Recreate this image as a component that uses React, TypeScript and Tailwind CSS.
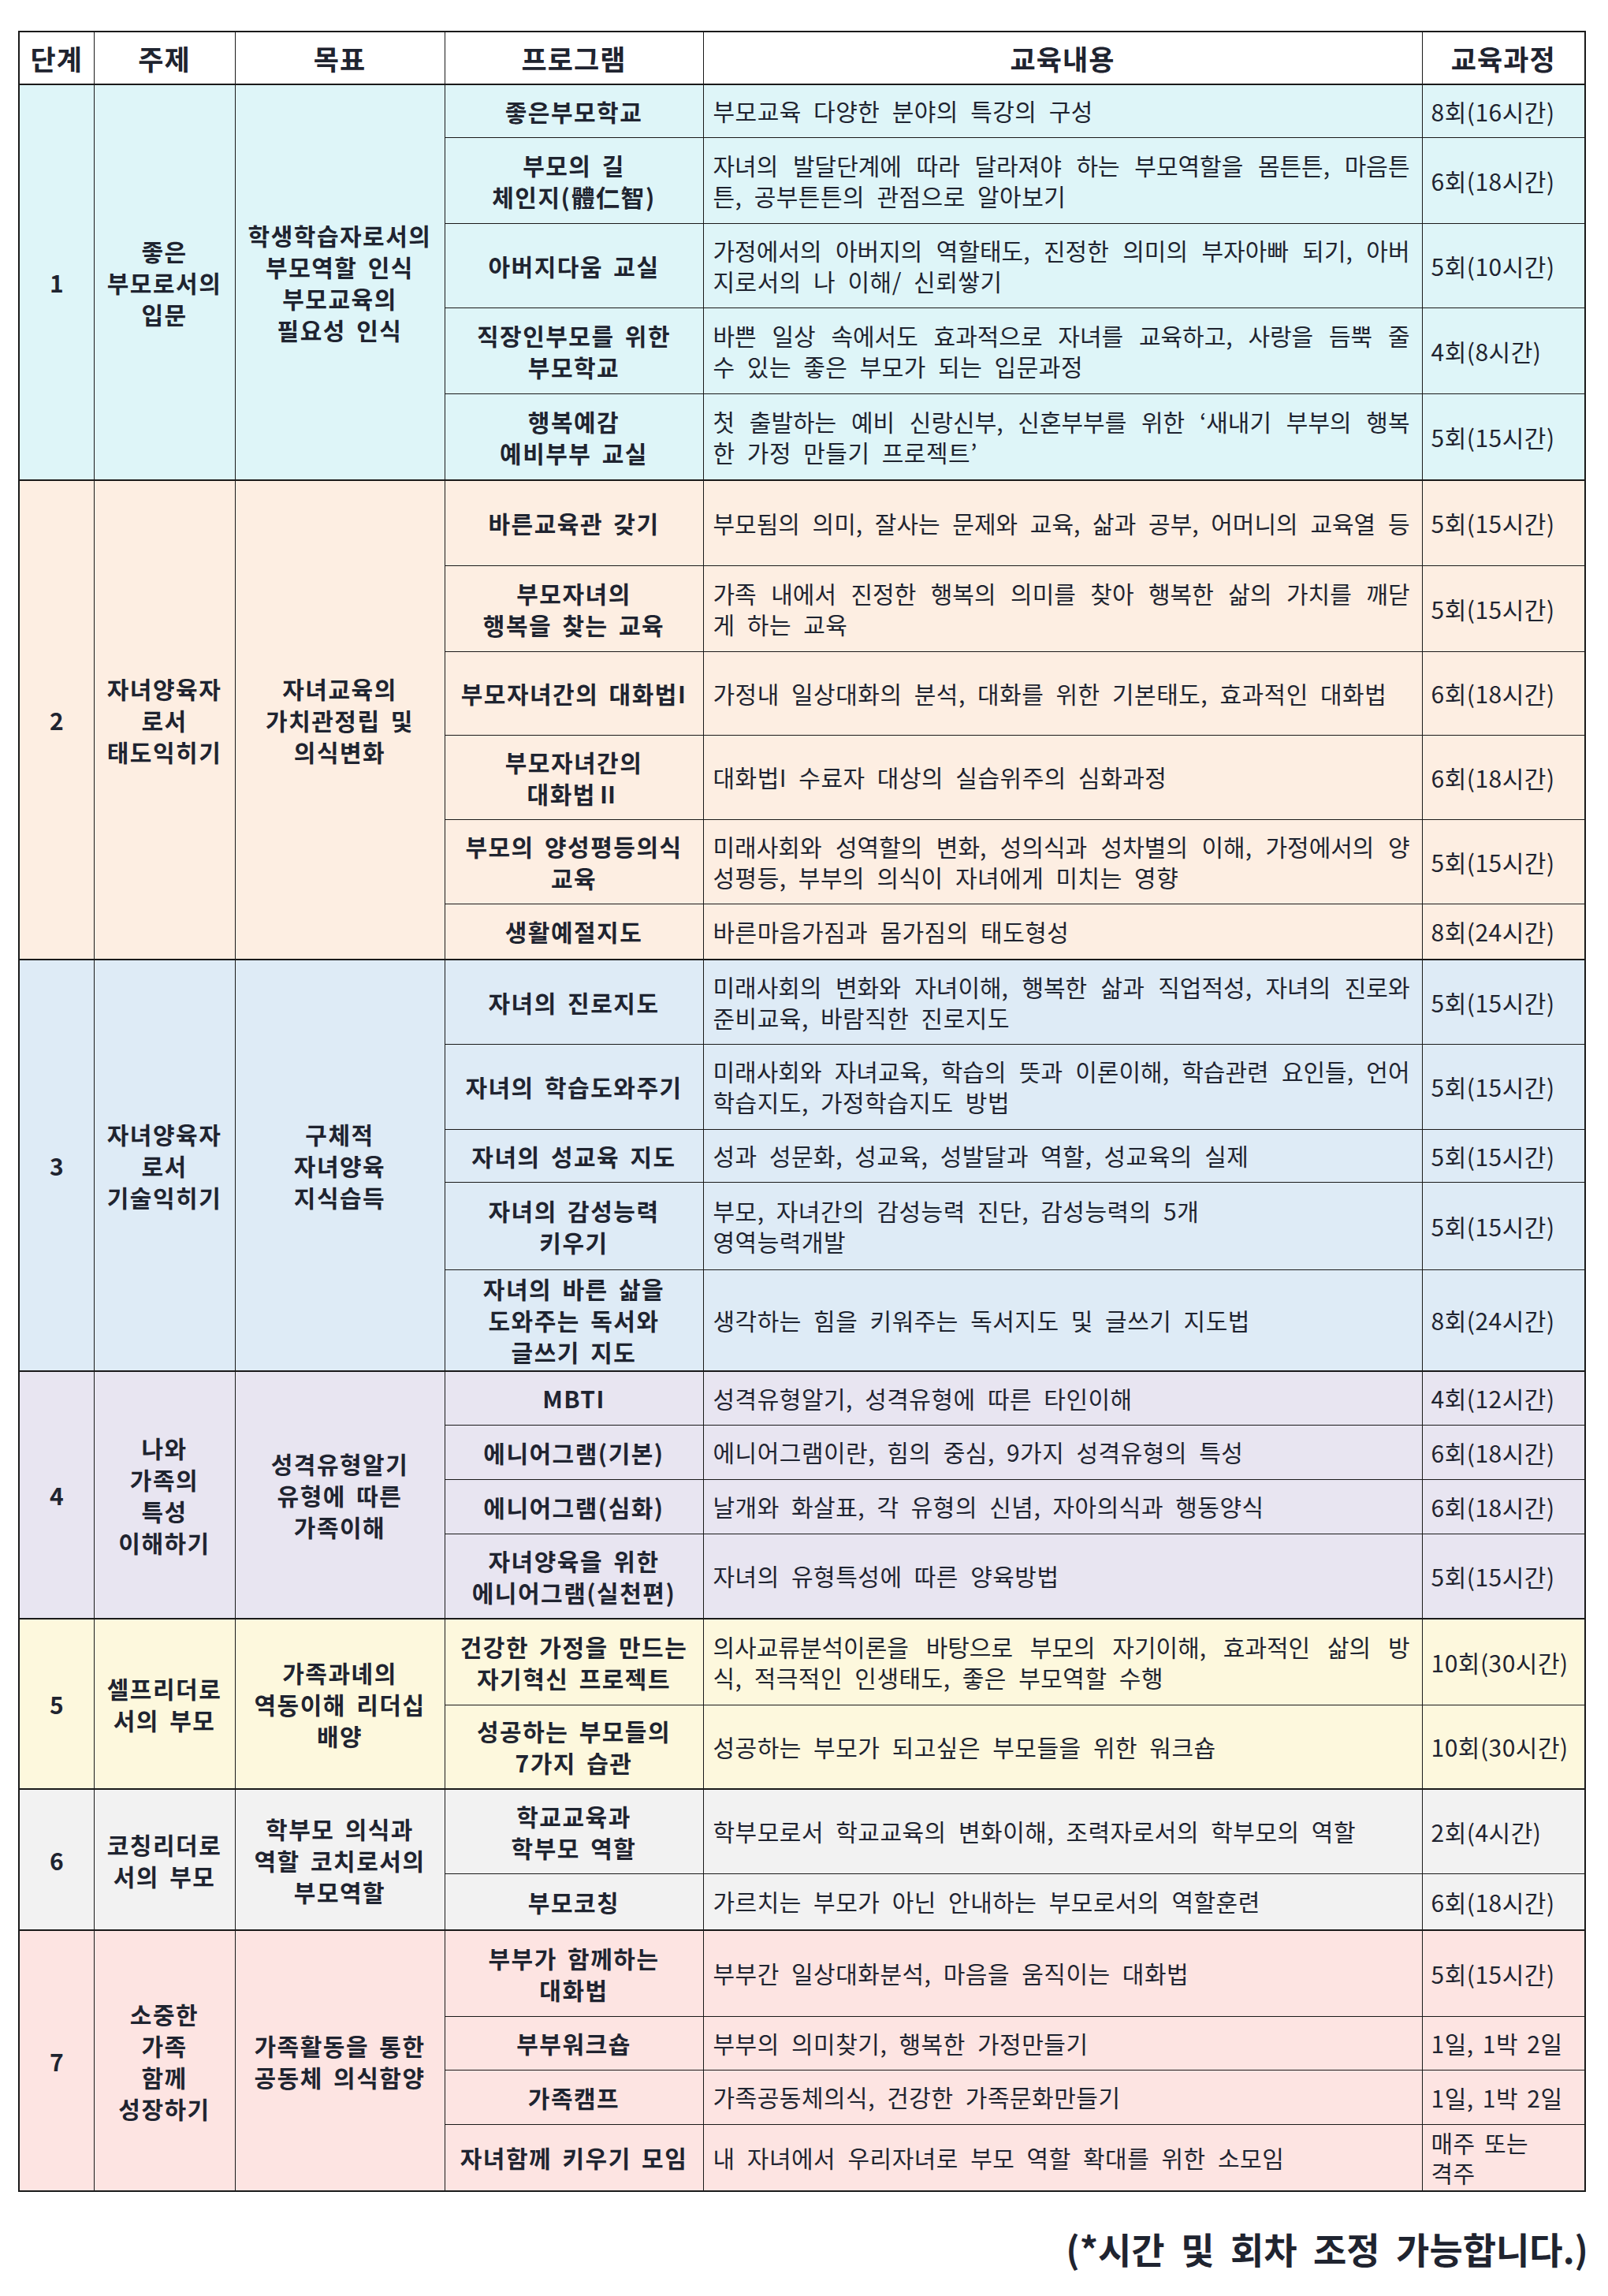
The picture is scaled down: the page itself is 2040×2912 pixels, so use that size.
import React from 'react'

interface Row {
  h: string
  prog: string[]
  content: string[]
  fill?: boolean
  course: string[]
}

interface Section {
  no: string
  topic: string[]
  goal: string[]
  bg: string
  rows: Row[]
}

const sections: Section[] = [
  {
    no: '1',
    topic: ['좋은', '부모로서의', '입문'],
    goal: ['학생학습자로서의', '부모역할 인식', '부모교육의', '필요성 인식'],
    bg: 'bg-[#def5f8]',
    rows: [
      { h: 'h-[67px]', prog: ['좋은부모학교'], content: ['부모교육 다양한 분야의 특강의 구성'], course: ['8회(16시간)'] },
      {
        h: 'h-[109px]',
        prog: ['부모의 길', '체인지(體仁智)'],
        content: ['자녀의 발달단계에 따라 달라져야 하는 부모역할을 몸튼튼, 마음튼', '튼, 공부튼튼의 관점으로 알아보기'],
        fill: true,
        course: ['6회(18시간)']
      },
      {
        h: 'h-[107px]',
        prog: ['아버지다움 교실'],
        content: ['가정에서의 아버지의 역할태도, 진정한 의미의 부자아빠 되기, 아버', '지로서의 나 이해/ 신뢰쌓기'],
        fill: true,
        course: ['5회(10시간)']
      },
      {
        h: 'h-[109px]',
        prog: ['직장인부모를 위한', '부모학교'],
        content: ['바쁜 일상 속에서도 효과적으로 자녀를 교육하고, 사랑을 듬뿍 줄', '수 있는 좋은 부모가 되는 입문과정'],
        fill: true,
        course: ['4회(8시간)']
      },
      {
        h: 'h-[110px]',
        prog: ['행복예감', '예비부부 교실'],
        content: ['첫 출발하는 예비 신랑신부, 신혼부부를 위한 ‘새내기 부부의 행복', '한 가정 만들기 프로젝트’'],
        fill: true,
        course: ['5회(15시간)']
      }
    ]
  },
  {
    no: '2',
    topic: ['자녀양육자', '로서', '태도익히기'],
    goal: ['자녀교육의', '가치관정립 및', '의식변화'],
    bg: 'bg-[#fdeee2]',
    rows: [
      {
        h: 'h-[108px]',
        prog: ['바른교육관 갖기'],
        content: ['부모됨의 의미, 잘사는 문제와 교육, 삶과 공부, 어머니의 교육열 등', ''],
        fill: true,
        course: ['5회(15시간)']
      },
      {
        h: 'h-[109px]',
        prog: ['부모자녀의', '행복을 찾는 교육'],
        content: ['가족 내에서 진정한 행복의 의미를 찾아 행복한 삶의 가치를 깨닫', '게 하는 교육'],
        fill: true,
        course: ['5회(15시간)']
      },
      {
        h: 'h-[106px]',
        prog: ['부모자녀간의 대화법I'],
        content: ['가정내 일상대화의 분석, 대화를 위한 기본태도, 효과적인 대화법'],
        course: ['6회(18시간)']
      },
      {
        h: 'h-[107px]',
        prog: ['부모자녀간의', '대화법Ⅱ'],
        content: ['대화법I 수료자 대상의 실습위주의 심화과정'],
        course: ['6회(18시간)']
      },
      {
        h: 'h-[107px]',
        prog: ['부모의 양성평등의식', '교육'],
        content: ['미래사회와 성역할의 변화, 성의식과 성차별의 이해, 가정에서의 양', '성평등, 부부의 의식이 자녀에게 미치는 영향'],
        fill: true,
        course: ['5회(15시간)']
      },
      { h: 'h-[71px]', prog: ['생활예절지도'], content: ['바른마음가짐과 몸가짐의 태도형성'], course: ['8회(24시간)'] }
    ]
  },
  {
    no: '3',
    topic: ['자녀양육자', '로서', '기술익히기'],
    goal: ['구체적', '자녀양육', '지식습득'],
    bg: 'bg-[#deebf6]',
    rows: [
      {
        h: 'h-[107px]',
        prog: ['자녀의 진로지도'],
        content: ['미래사회의 변화와 자녀이해, 행복한 삶과 직업적성, 자녀의 진로와', '준비교육, 바람직한 진로지도'],
        fill: true,
        course: ['5회(15시간)']
      },
      {
        h: 'h-[108px]',
        prog: ['자녀의 학습도와주기'],
        content: ['미래사회와 자녀교육, 학습의 뜻과 이론이해, 학습관련 요인들, 언어', '학습지도, 가정학습지도 방법'],
        fill: true,
        course: ['5회(15시간)']
      },
      { h: 'h-[67px]', prog: ['자녀의 성교육 지도'], content: ['성과 성문화, 성교육, 성발달과 역할, 성교육의 실제'], course: ['5회(15시간)'] },
      {
        h: 'h-[111px]',
        prog: ['자녀의 감성능력', '키우기'],
        content: ['부모, 자녀간의 감성능력 진단, 감성능력의 5개', '영역능력개발'],
        course: ['5회(15시간)']
      },
      {
        h: 'h-[129px]',
        prog: ['자녀의 바른 삶을', '도와주는 독서와', '글쓰기 지도'],
        content: ['생각하는 힘을 키워주는 독서지도 및 글쓰기 지도법'],
        course: ['8회(24시간)']
      }
    ]
  },
  {
    no: '4',
    topic: ['나와', '가족의', '특성', '이해하기'],
    goal: ['성격유형알기', '유형에 따른', '가족이해'],
    bg: 'bg-[#e8e5f1]',
    rows: [
      { h: 'h-[68px]', prog: ['MBTI'], content: ['성격유형알기, 성격유형에 따른 타인이해'], course: ['4회(12시간)'] },
      { h: 'h-[69px]', prog: ['에니어그램(기본)'], content: ['에니어그램이란, 힘의 중심, 9가지 성격유형의 특성'], course: ['6회(18시간)'] },
      { h: 'h-[69px]', prog: ['에니어그램(심화)'], content: ['날개와 화살표, 각 유형의 신념, 자아의식과 행동양식'], course: ['6회(18시간)'] },
      {
        h: 'h-[108px]',
        prog: ['자녀양육을 위한', '에니어그램(실천편)'],
        content: ['자녀의 유형특성에 따른 양육방법'],
        course: ['5회(15시간)']
      }
    ]
  },
  {
    no: '5',
    topic: ['셀프리더로', '서의 부모'],
    goal: ['가족과녜의', '역동이해 리더십', '배양'],
    bg: 'bg-[#fdf8dd]',
    rows: [
      {
        h: 'h-[109px]',
        prog: ['건강한 가정을 만드는', '자기혁신 프로젝트'],
        content: ['의사교류분석이론을 바탕으로 부모의 자기이해, 효과적인 삶의 방', '식, 적극적인 인생태도, 좋은 부모역할 수행'],
        fill: true,
        course: ['10회(30시간)']
      },
      {
        h: 'h-[107px]',
        prog: ['성공하는 부모들의', '7가지 습관'],
        content: ['성공하는 부모가 되고싶은 부모들을 위한 워크숍'],
        course: ['10회(30시간)']
      }
    ]
  },
  {
    no: '6',
    topic: ['코칭리더로', '서의 부모'],
    goal: ['학부모 의식과', '역할 코치로서의', '부모역할'],
    bg: 'bg-[#f2f2f2]',
    rows: [
      {
        h: 'h-[107px]',
        prog: ['학교교육과', '학부모 역할'],
        content: ['학부모로서 학교교육의 변화이해, 조력자로서의 학부모의 역할'],
        course: ['2회(4시간)']
      },
      { h: 'h-[72px]', prog: ['부모코칭'], content: ['가르치는 부모가 아닌 안내하는 부모로서의 역할훈련'], course: ['6회(18시간)'] }
    ]
  },
  {
    no: '7',
    topic: ['소중한', '가족', '함께', '성장하기'],
    goal: ['가족활동을 통한', '공동체 의식함양'],
    bg: 'bg-[#fde4e2]',
    rows: [
      {
        h: 'h-[109px]',
        prog: ['부부가 함께하는', '대화법'],
        content: ['부부간 일상대화분석, 마음을 움직이는 대화법'],
        course: ['5회(15시간)']
      },
      { h: 'h-[68px]', prog: ['부부워크숍'], content: ['부부의 의미찾기, 행복한 가정만들기'], course: ['1일, 1박 2일'] },
      { h: 'h-[69px]', prog: ['가족캠프'], content: ['가족공동체의식, 건강한 가족문화만들기'], course: ['1일, 1박 2일'] },
      {
        h: 'h-[85px]',
        prog: ['자녀함께 키우기 모임'],
        content: ['내 자녀에서 우리자녀로 부모 역할 확대를 위한 소모임'],
        course: ['매주 또는', '격주']
      }
    ]
  }
]

const cell = 'border border-[#1a1a1a] align-middle p-0'
const bold = 'text-center text-[30px] font-bold leading-[40px] tracking-[1.5px] [word-spacing:5px]'

function Lines({ lines }: { lines: string[] }) {
  return (
    <>
      {lines.map((l, i) => (
        <div key={i}>{l}</div>
      ))}
    </>
  )
}

export default function App() {
  return (
    <div
      className="w-[2040px] min-h-[2912px] bg-white text-[#1f2430] pt-[39px] pl-[23px] pr-[30px]"
      style={{ fontFamily: '"Noto Sans CJK KR", "Noto Sans", sans-serif' }}
    >
      <table className="table-fixed border-collapse w-[1987px] border-2 border-[#1a1a1a]">
        <colgroup>
          <col className="w-[95px]" />
          <col className="w-[179px]" />
          <col className="w-[266px]" />
          <col className="w-[328px]" />
          <col className="w-[912px]" />
          <col className="w-[207px]" />
        </colgroup>
        <thead>
          <tr className="h-[67px] text-[35px] font-bold leading-[40px] tracking-[1px] bg-white">
            <th className={`${cell} text-center`}>단계</th>
            <th className={`${cell} text-center`}>주제</th>
            <th className={`${cell} text-center`}>목표</th>
            <th className={`${cell} text-center`}>프로그램</th>
            <th className={`${cell} text-center`}>교육내용</th>
            <th className={`${cell} text-center`}>교육과정</th>
          </tr>
        </thead>
        {sections.map((s) => (
          <tbody key={s.no} className={`${s.bg} border-t-2 border-[#1a1a1a]`}>
            {s.rows.map((r, i) => (
              <tr key={i} className={r.h}>
                {i === 0 && (
                  <>
                    <td rowSpan={s.rows.length} className={`${cell} text-center text-[30px] font-bold leading-[40px]`}>
                      {s.no}
                    </td>
                    <td rowSpan={s.rows.length} className={`${cell} ${bold}`}>
                      <Lines lines={s.topic} />
                    </td>
                    <td rowSpan={s.rows.length} className={`${cell} ${bold}`}>
                      <Lines lines={s.goal} />
                    </td>
                  </>
                )}
                <td className={`${cell} ${bold} px-1`}>
                  <Lines lines={r.prog} />
                </td>
                <td className={`${cell} text-[30px] leading-[39px] pl-[12px] pr-[15px]`}>
                  {r.content.map((l, j) =>
                    r.fill && j < r.content.length - 1 ? (
                      <div key={j} className="text-justify [text-align-last:justify]">
                        {l}
                      </div>
                    ) : l ? (
                      <div key={j} className="tracking-[0.5px] [word-spacing:8px]">
                        {l}
                      </div>
                    ) : null
                  )}
                </td>
                <td className={`${cell} text-[30px] leading-[38px] pl-[11px] tracking-[0.5px] [word-spacing:4px]`}>
                  <Lines lines={r.course} />
                </td>
              </tr>
            ))}
          </tbody>
        ))}
      </table>
      <div className="mt-[44px] text-right text-[46px] font-bold leading-[54px] mr-[-5px] [word-spacing:10px]">
        (*시간 및 회차 조정 가능합니다.)
      </div>
    </div>
  )
}
